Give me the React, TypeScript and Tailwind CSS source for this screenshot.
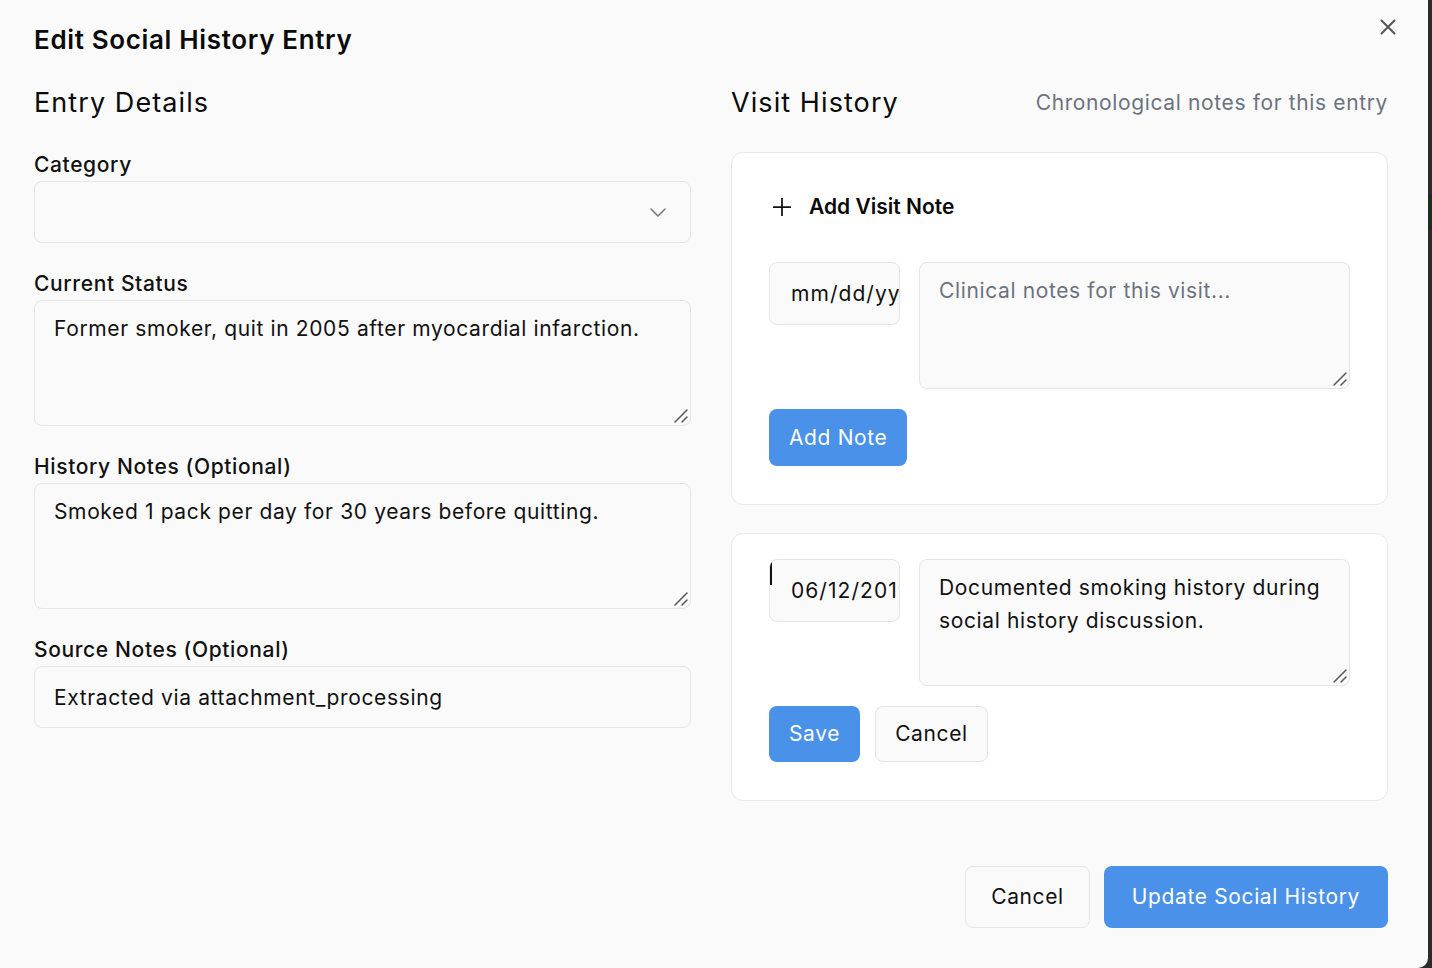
import { useState } from 'react';

const box = 'w-full rounded-lg border border-[#e5e5e5] bg-[#fafafa] text-[21px] tracking-[0.03em] text-[#111] focus:outline-none';
const label = 'block text-[21px] leading-[28px] tracking-[0.03em] font-medium text-[#111] mb-[2px] pt-[1px]';

function Grip() {
  return (
    <svg className="pointer-events-none absolute right-[2px] bottom-[2px]" width="16" height="16" viewBox="0 0 16 16" fill="none" stroke="#555" strokeWidth="1.5" strokeLinecap="round">
      <path d="M2 14L14 2M9 14l5-5" />
    </svg>
  );
}

function Area({ value, onChange, placeholder, h }: { value: string; onChange: (v: string) => void; placeholder?: string; h: string }) {
  return (
    <div className="relative flex-1">
      <textarea
        value={value}
        placeholder={placeholder}
        onChange={(e) => onChange(e.target.value)}
        className={`${box} block resize-none ${h} px-[19px] py-[11px] leading-[33px] placeholder:text-[#6b7280]`}
      />
      <Grip />
    </div>
  );
}

function DateBox({ value, caret }: { value: string; caret?: boolean }) {
  return (
    <div className="relative w-[131px] h-[63px] shrink-0 rounded-lg border border-[#e5e5e5] bg-[#fafafa] overflow-hidden flex items-center pl-[21px] whitespace-nowrap text-[21px] tracking-[0.05em] text-[#111]">
      {value}
      {caret && <span className="absolute left-0 top-[-1px] h-[26px] w-[2px] bg-[#111]" />}
    </div>
  );
}

export default function App() {
  const [status, setStatus] = useState('Former smoker, quit in 2005 after myocardial infarction.');
  const [history, setHistory] = useState('Smoked 1 pack per day for 30 years before quitting.');
  const [source, setSource] = useState('Extracted via attachment_processing');
  const [newNote, setNewNote] = useState('');
  const [editNote, setEditNote] = useState('Documented smoking history during social history discussion.');

  return (
    <div className="w-full h-[968px] bg-[#2b2b2b] flex font-[Inter,sans-serif] overflow-hidden">
      <div className="relative w-[1428px] h-[968px] shrink-0 bg-[#fafafa] rounded-br-[10px] flex flex-col pl-[34px] pr-[40px] pt-[24px]">
        <button className="absolute top-[19px] right-[32px] text-[#555]" aria-label="Close">
          <svg width="16" height="16" viewBox="0 0 16 16" fill="none" stroke="currentColor" strokeWidth="2" strokeLinecap="round">
            <path d="M1.5 1.5l13 13M14.5 1.5l-13 13" />
          </svg>
        </button>

        <h2 className="text-[26px] leading-[32px] tracking-[0.025em] font-semibold text-[#0a0a0a]">Edit Social History Entry</h2>

        <div className="grid grid-cols-2 gap-[40px] mt-[30px]">
          {/* left column */}
          <div>
            <h3 className="text-[27px] leading-[34px] tracking-[0.04em] text-[#0a0a0a] mb-[30px]">Entry Details</h3>
            <div className="flex flex-col gap-[26px]">
              <div>
                <label className={label}>Category</label>
                <div className={`${box} h-[62px] flex items-center justify-end pr-[24px]`}>
                  <svg width="16" height="9" viewBox="0 0 16 9" fill="none" stroke="#777" strokeWidth="1.5" strokeLinecap="round" strokeLinejoin="round">
                    <path d="M1 1l7 7 7-7" />
                  </svg>
                </div>
              </div>
              <div>
                <label className={label}>Current Status</label>
                <Area value={status} onChange={setStatus} h="h-[126px]" />
              </div>
              <div>
                <label className={label}>History Notes (Optional)</label>
                <Area value={history} onChange={setHistory} h="h-[126px]" />
              </div>
              <div>
                <label className={label}>Source Notes (Optional)</label>
                <input
                  value={source}
                  onChange={(e) => setSource(e.target.value)}
                  className={`${box} block h-[62px] px-[19px]`}
                />
              </div>
            </div>
          </div>

          {/* right column */}
          <div>
            <div className="flex items-center justify-between h-[34px]">
              <h3 className="text-[27px] leading-[34px] tracking-[0.04em] text-[#0a0a0a]">Visit History</h3>
              <span className="text-[21px] tracking-[0.03em] text-[#6b7280]">Chronological notes for this entry</span>
            </div>

            <div className="mt-[32px] rounded-xl border border-[#e8e8e8] bg-white px-[37px] pt-[40px] pb-[38px]">
              <div className="flex items-center gap-[18px] h-[28px] mb-[41px] pl-[4px]">
                <svg width="18" height="18" viewBox="0 0 18 18" fill="none" stroke="#111" strokeWidth="1.75">
                  <path d="M9 0v18M0 9h18" />
                </svg>
                <span className="text-[21px] font-semibold text-[#0a0a0a]">Add Visit Note</span>
              </div>
              <div className="flex items-start gap-[19px]">
                <DateBox value="mm/dd/yyyy" />
                <Area value={newNote} onChange={setNewNote} placeholder="Clinical notes for this visit..." h="h-[127px]" />
              </div>
              <button className="mt-[20px] h-[57px] px-[20px] rounded-lg bg-[#4a91e9] text-white text-[21px] tracking-[0.03em]">Add Note</button>
            </div>

            <div className="mt-[28px] rounded-xl border border-[#e8e8e8] bg-white px-[37px] pt-[25px] pb-[38px]">
              <div className="flex items-start gap-[19px]">
                <DateBox value="06/12/2019" caret />
                <Area value={editNote} onChange={setEditNote} h="h-[127px]" />
              </div>
              <div className="mt-[20px] flex gap-[15px]">
                <button className="h-[56px] px-[20px] rounded-lg bg-[#4a91e9] text-white text-[21px] tracking-[0.03em]">Save</button>
                <button className="h-[56px] px-[19px] rounded-lg border border-[#e5e5e5] bg-[#fafafa] text-[#111] text-[21px] tracking-[0.03em]">Cancel</button>
              </div>
            </div>
          </div>
        </div>

        <div className="mt-auto pb-[40px] flex justify-end gap-[14px]">
          <button className="h-[62px] px-[25px] rounded-lg border border-[#e5e5e5] bg-[#fafafa] text-[#111] text-[21px] tracking-[0.03em]">Cancel</button>
          <button className="h-[62px] px-[28px] rounded-lg bg-[#4a91e9] text-white text-[21px] tracking-[0.03em]">Update Social History</button>
        </div>
      </div>
      <div className="flex-1 flex flex-col">
        <div className="h-[195px]" />
        <div className="h-[35px] bg-[#1d2e1f]" />
      </div>
    </div>
  );
}
